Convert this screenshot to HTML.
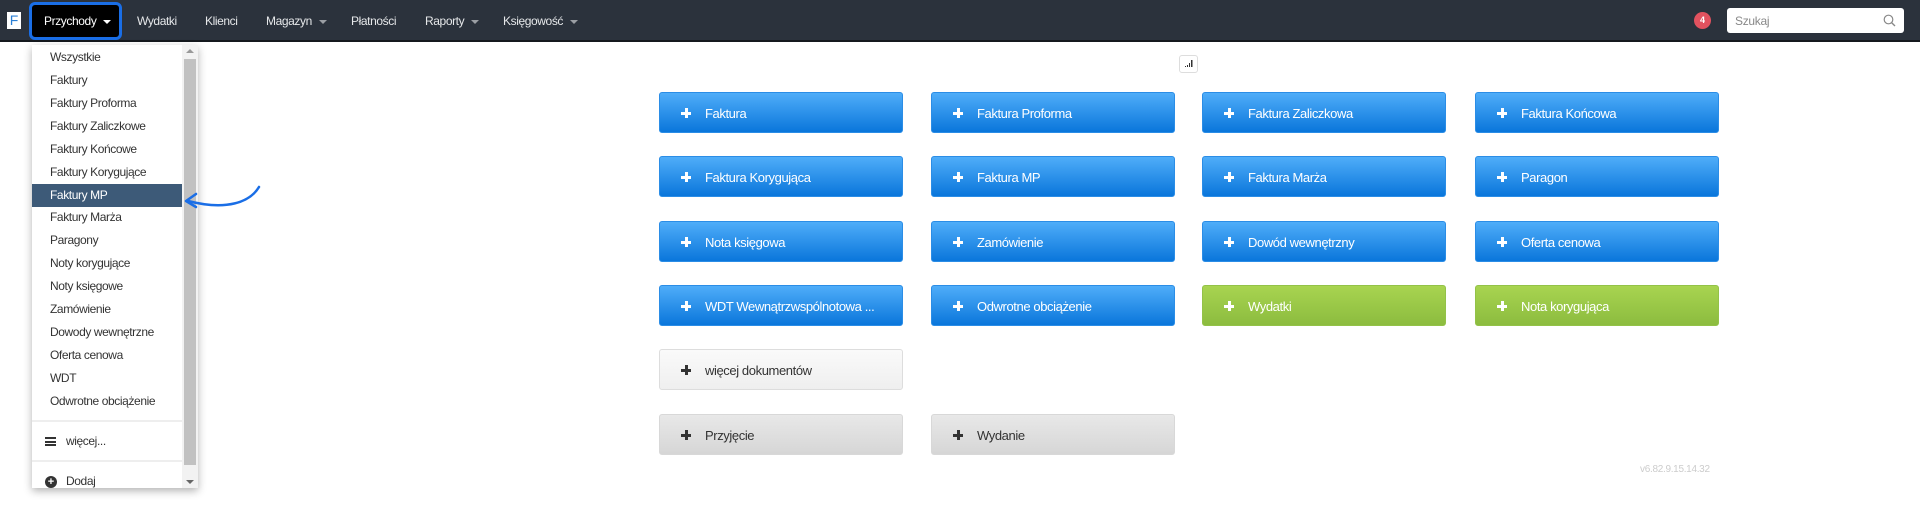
<!DOCTYPE html>
<html><head><meta charset="utf-8"><style>
*{box-sizing:border-box;margin:0;padding:0}
body{width:1920px;height:510px;background:#fff;font-family:"Liberation Sans",sans-serif;position:relative;overflow:hidden}
.nav{position:absolute;left:0;top:0;width:1920px;height:42px;background:#2b323c;border-bottom:2px solid #15191e}
.logo{position:absolute;left:7px;top:12px;width:14px;height:17px;background:#fff;color:#2a7fd5;font-size:14px;line-height:17px;text-align:center}
.act{position:absolute;left:29px;top:2px;width:93px;height:38px;background:#000;border:3px solid #1a6ee6;border-radius:6px;color:#fff;font-size:12px;letter-spacing:-.4px;line-height:32px;padding-left:12px}
.ni{position:absolute;top:0;line-height:42px;color:#e6e8ea;font-size:12px;letter-spacing:-.4px}
.car{display:inline-block;width:0;height:0;border-left:4px solid transparent;border-right:4px solid transparent;border-top:4px solid currentColor;margin-left:7px;vertical-align:middle;opacity:.6}
.badge{position:absolute;left:1694px;top:12px;width:17px;height:17px;border-radius:50%;background:#e2525f;color:#fff;font-size:9px;line-height:17px;text-align:center;font-weight:bold}
.search{position:absolute;left:1727px;top:8px;width:177px;height:25px;background:#fff;border-radius:3px;font-size:12px;letter-spacing:-.3px;color:#888;padding:6px 8px}
.dd{position:absolute;left:32px;top:45px;width:166px;height:443px;background:#fff;box-shadow:0 3px 8px rgba(0,0,0,.3)}
.sb{position:absolute;left:150px;top:0;width:16px;height:443px;background:#f2f2f2}
.th{position:absolute;left:2px;top:14px;width:12px;height:406px;background:#c1c1c1}
.di{position:absolute;left:0;width:150px;height:23px;line-height:23px;padding-left:18px;font-size:12px;letter-spacing:-.4px;color:#333}
.hl{background:#3d5a78;color:#fff}
.sep{position:absolute;left:0;width:150px;height:2px;background:#eee}
.btn{position:absolute;width:244px;height:41px;border-radius:3px;color:#fff;font-size:13px;letter-spacing:-.4px;line-height:41px;padding-left:45px;white-space:nowrap;overflow:hidden}
.btn:before{content:"";position:absolute;left:21px;top:15px;width:10px;height:10px;background:linear-gradient(currentColor,currentColor) center/10px 3px no-repeat,linear-gradient(currentColor,currentColor) center/3px 10px no-repeat}
.b{background:linear-gradient(#4fadf9,#0a76db);border:1px solid #2b8de6}
.g{background:linear-gradient(#a8d450,#8cbc3f);border:1px solid #93c248}
.w{background:linear-gradient(#fafafa,#efefef);border:1px solid #ddd;color:#333}
.gr{background:linear-gradient(#e8e8e8,#d6d6d6);border:1px solid #d8d8d8;color:#333}
</style></head><body>
<div class="nav">
<div class="logo">F</div>
<div class="act">Przychody<span class="car" style="opacity:1"></span></div>
<div class="ni" style="left:137px">Wydatki</div>
<div class="ni" style="left:205px">Klienci</div>
<div class="ni" style="left:266px">Magazyn<span class="car"></span></div>
<div class="ni" style="left:351px">Płatności</div>
<div class="ni" style="left:425px">Raporty<span class="car"></span></div>
<div class="ni" style="left:503px">Księgowość<span class="car"></span></div>
<div class="badge">4</div>
<div class="search">Szukaj<svg style="position:absolute;right:8px;top:6px" width="13" height="13" viewBox="0 0 13 13"><circle cx="5.5" cy="5.5" r="4.3" fill="none" stroke="#888" stroke-width="1.2"/><path d="M8.7 8.7L12 12" stroke="#888" stroke-width="1.4"/></svg></div>
</div>
<div class="dd">
<div class="sb"><div class="th"></div><div style="position:absolute;left:4px;top:4px;border:4px solid transparent;border-bottom:4px solid #999;border-top:0"></div><div style="position:absolute;left:4px;bottom:4px;border:4px solid transparent;border-top:4px solid #666;border-bottom:0"></div></div>
<div class="di" style="top:1px">Wszystkie</div>
<div class="di" style="top:24px">Faktury</div>
<div class="di" style="top:47px">Faktury Proforma</div>
<div class="di" style="top:70px">Faktury Zaliczkowe</div>
<div class="di" style="top:93px">Faktury Końcowe</div>
<div class="di" style="top:116px">Faktury Korygujące</div>
<div class="di hl" style="top:139px">Faktury MP</div>
<div class="di" style="top:161px">Faktury Marża</div>
<div class="di" style="top:184px">Paragony</div>
<div class="di" style="top:207px">Noty korygujące</div>
<div class="di" style="top:230px">Noty księgowe</div>
<div class="di" style="top:253px">Zamówienie</div>
<div class="di" style="top:276px">Dowody wewnętrzne</div>
<div class="di" style="top:299px">Oferta cenowa</div>
<div class="di" style="top:322px">WDT</div>
<div class="di" style="top:345px">Odwrotne obciążenie</div>
<div class="sep" style="top:375px"></div>
<div class="di" style="top:385px;padding-left:34px">więcej...</div>
<div style="position:absolute;left:13px;top:392px;width:11px;height:9px;border-top:2px solid #333;border-bottom:2px solid #333"><div style="margin-top:1.5px;height:2px;background:#333"></div></div>
<div class="sep" style="top:415px"></div>
<div class="di" style="top:425px;padding-left:34px">Dodaj</div>
<div style="position:absolute;left:13px;top:431px;width:12px;height:12px;border-radius:50%;background:#333;color:#fff;font-size:11px;line-height:12px;text-align:center;font-weight:bold">+</div>
</div>
<svg style="position:absolute;left:182px;top:184px" width="82" height="30" viewBox="0 0 82 30"><path d="M77 3C68 18 45 27 6 17" fill="none" stroke="#1a6ee6" stroke-width="2.5" stroke-linecap="round"/><path d="M14 10L4 17L14 23" fill="none" stroke="#1a6ee6" stroke-width="2.5" stroke-linecap="round" stroke-linejoin="round"/></svg>
<div style="position:absolute;left:1179px;top:55px;width:19px;height:18px;border:1px solid #ddd;border-radius:3px"><svg width="17" height="16"><rect x="5" y="10" width="1" height="1" fill="#333"/><rect x="7" y="9" width="1" height="2" fill="#333"/><rect x="9" y="7" width="1" height="4" fill="#333"/><rect x="11" y="4" width="1.5" height="7" fill="#333"/></svg></div>
<div class="btn b" style="left:659px;top:92px">Faktura</div>
<div class="btn b" style="left:931px;top:92px">Faktura Proforma</div>
<div class="btn b" style="left:1202px;top:92px">Faktura Zaliczkowa</div>
<div class="btn b" style="left:1475px;top:92px">Faktura Końcowa</div>
<div class="btn b" style="left:659px;top:156px">Faktura Korygująca</div>
<div class="btn b" style="left:931px;top:156px">Faktura MP</div>
<div class="btn b" style="left:1202px;top:156px">Faktura Marża</div>
<div class="btn b" style="left:1475px;top:156px">Paragon</div>
<div class="btn b" style="left:659px;top:221px">Nota księgowa</div>
<div class="btn b" style="left:931px;top:221px">Zamówienie</div>
<div class="btn b" style="left:1202px;top:221px">Dowód wewnętrzny</div>
<div class="btn b" style="left:1475px;top:221px">Oferta cenowa</div>
<div class="btn b" style="left:659px;top:285px">WDT Wewnątrzwspólnotowa ...</div>
<div class="btn b" style="left:931px;top:285px">Odwrotne obciążenie</div>
<div class="btn g" style="left:1202px;top:285px">Wydatki</div>
<div class="btn g" style="left:1475px;top:285px">Nota korygująca</div>
<div class="btn w" style="left:659px;top:349px">więcej dokumentów</div>
<div class="btn gr" style="left:659px;top:414px">Przyjęcie</div>
<div class="btn gr" style="left:931px;top:414px">Wydanie</div>
<div style="position:absolute;left:1640px;top:464px;font-size:10px;letter-spacing:-.3px;color:#ccc">v6.82.9.15.14.32</div>
</body></html>
